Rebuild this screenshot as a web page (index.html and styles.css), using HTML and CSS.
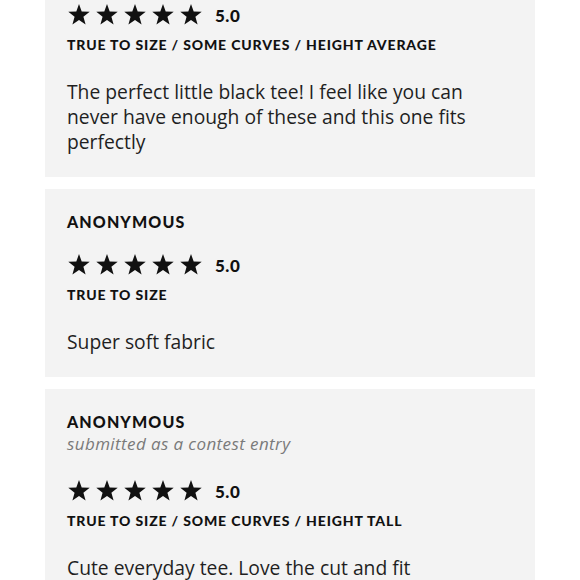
FILE: index.html
```html
<!DOCTYPE html>
<html>
<head>
<meta charset="utf-8">
<link rel="stylesheet" href="styles.css">
</head>
<body>
<div class="reviews">
  <div class="card card-first">
    <div class="rating rating-first">
      <div class="stars">
        <svg viewBox="0 0 24 24"><polygon points="12,1 14.7,8.6 22.7,8.8 16.4,13.8 18.6,21.6 12,17 5.4,21.6 7.6,13.8 1.3,8.8 9.3,8.6"/></svg>
        <svg viewBox="0 0 24 24"><polygon points="12,1 14.7,8.6 22.7,8.8 16.4,13.8 18.6,21.6 12,17 5.4,21.6 7.6,13.8 1.3,8.8 9.3,8.6"/></svg>
        <svg viewBox="0 0 24 24"><polygon points="12,1 14.7,8.6 22.7,8.8 16.4,13.8 18.6,21.6 12,17 5.4,21.6 7.6,13.8 1.3,8.8 9.3,8.6"/></svg>
        <svg viewBox="0 0 24 24"><polygon points="12,1 14.7,8.6 22.7,8.8 16.4,13.8 18.6,21.6 12,17 5.4,21.6 7.6,13.8 1.3,8.8 9.3,8.6"/></svg>
        <svg viewBox="0 0 24 24"><polygon points="12,1 14.7,8.6 22.7,8.8 16.4,13.8 18.6,21.6 12,17 5.4,21.6 7.6,13.8 1.3,8.8 9.3,8.6"/></svg>
      </div>
      <span class="score">5.0</span>
    </div>
    <div class="tags">TRUE TO SIZE / SOME CURVES / HEIGHT AVERAGE</div>
    <p class="body">The perfect little black tee! I feel like you can never have enough of these and this one fits perfectly</p>
  </div>
  <div class="card">
    <div class="name">ANONYMOUS</div>
    <div class="rating">
      <div class="stars">
        <svg viewBox="0 0 24 24"><polygon points="12,1 14.7,8.6 22.7,8.8 16.4,13.8 18.6,21.6 12,17 5.4,21.6 7.6,13.8 1.3,8.8 9.3,8.6"/></svg>
        <svg viewBox="0 0 24 24"><polygon points="12,1 14.7,8.6 22.7,8.8 16.4,13.8 18.6,21.6 12,17 5.4,21.6 7.6,13.8 1.3,8.8 9.3,8.6"/></svg>
        <svg viewBox="0 0 24 24"><polygon points="12,1 14.7,8.6 22.7,8.8 16.4,13.8 18.6,21.6 12,17 5.4,21.6 7.6,13.8 1.3,8.8 9.3,8.6"/></svg>
        <svg viewBox="0 0 24 24"><polygon points="12,1 14.7,8.6 22.7,8.8 16.4,13.8 18.6,21.6 12,17 5.4,21.6 7.6,13.8 1.3,8.8 9.3,8.6"/></svg>
        <svg viewBox="0 0 24 24"><polygon points="12,1 14.7,8.6 22.7,8.8 16.4,13.8 18.6,21.6 12,17 5.4,21.6 7.6,13.8 1.3,8.8 9.3,8.6"/></svg>
      </div>
      <span class="score">5.0</span>
    </div>
    <div class="tags">TRUE TO SIZE</div>
    <p class="body">Super soft fabric</p>
  </div>
  <div class="card">
    <div class="name">ANONYMOUS</div>
    <div class="sub">submitted as a contest entry</div>
    <div class="rating rating-after-sub">
      <div class="stars">
        <svg viewBox="0 0 24 24"><polygon points="12,1 14.7,8.6 22.7,8.8 16.4,13.8 18.6,21.6 12,17 5.4,21.6 7.6,13.8 1.3,8.8 9.3,8.6"/></svg>
        <svg viewBox="0 0 24 24"><polygon points="12,1 14.7,8.6 22.7,8.8 16.4,13.8 18.6,21.6 12,17 5.4,21.6 7.6,13.8 1.3,8.8 9.3,8.6"/></svg>
        <svg viewBox="0 0 24 24"><polygon points="12,1 14.7,8.6 22.7,8.8 16.4,13.8 18.6,21.6 12,17 5.4,21.6 7.6,13.8 1.3,8.8 9.3,8.6"/></svg>
        <svg viewBox="0 0 24 24"><polygon points="12,1 14.7,8.6 22.7,8.8 16.4,13.8 18.6,21.6 12,17 5.4,21.6 7.6,13.8 1.3,8.8 9.3,8.6"/></svg>
        <svg viewBox="0 0 24 24"><polygon points="12,1 14.7,8.6 22.7,8.8 16.4,13.8 18.6,21.6 12,17 5.4,21.6 7.6,13.8 1.3,8.8 9.3,8.6"/></svg>
      </div>
      <span class="score">5.0</span>
    </div>
    <div class="tags">TRUE TO SIZE / SOME CURVES / HEIGHT TALL</div>
    <p class="body">Cute everyday tee. Love the cut and fit</p>
  </div>
</div>
</body>
</html>
```

FILE: styles.css
```css
html, body {
  margin: 0;
  padding: 0;
  background: #ffffff;
  overflow: hidden;
}
body {
  width: 580px;
  height: 580px;
  font-family: "Open Sans", sans-serif;
  color: #1f1f1f;
}
.reviews {
  margin: -20px 45px 0 45px;
  display: flex;
  flex-direction: column;
  gap: 12px;
}
.card {
  background: #f3f3f3;
  padding: 23px 22px 23px 22px;
}
.name {
  font-family: "Lato", sans-serif;
  font-weight: 900;
  font-size: 16px;
  line-height: 20px;
  letter-spacing: 1.1px;
  color: #111;
}
.sub {
  margin-top: 1px;
  font-family: "Open Sans", sans-serif;
  font-style: italic;
  font-size: 17px;
  line-height: 22px;
  letter-spacing: 0.4px;
  color: #7a7a7a;
}
.rating {
  margin-top: 21px;
  display: flex;
  align-items: center;
  height: 24px;
}
.rating-first {
  margin-top: 0;
}
.rating-after-sub {
  margin-top: 24px;
}
.stars {
  display: flex;
  gap: 4px;
}
.stars svg {
  width: 24px;
  height: 24px;
  fill: #111;
  display: block;
}
.score {
  margin-left: 12px;
  font-family: "Lato", sans-serif;
  font-weight: 900;
  font-size: 17px;
  letter-spacing: 0.5px;
  color: #111;
}
.tags {
  margin-top: 9px;
  font-family: "Lato", sans-serif;
  font-weight: 900;
  font-size: 14px;
  line-height: 18px;
  letter-spacing: 0.85px;
  color: #111;
}
.body {
  margin: 25px 0 0 0;
  font-size: 19.3px;
  line-height: 25px;
  color: #1f1f1f;
  max-width: 420px;
}
```
